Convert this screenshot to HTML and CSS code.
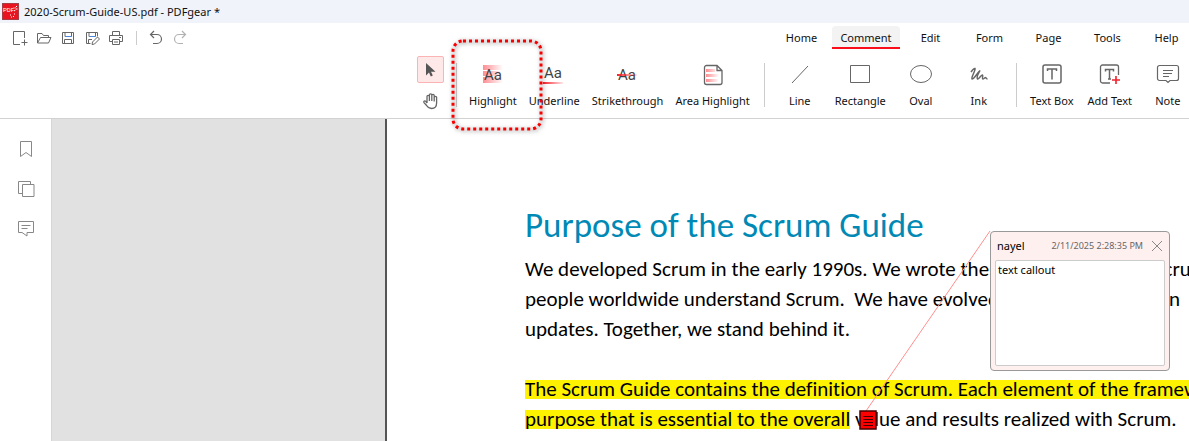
FILE: index.html
```html
<!DOCTYPE html>
<html lang="en">

<head>
    <meta charset="UTF-8">
    <meta name="viewport" content="width=device-width, initial-scale=1.0">
    <title>2020-Scrum-Guide-US.pdf - PDFgear *</title>
    <link rel="stylesheet" href="styles.css">
</head>

<body>
    <header class="titlebar">
        <svg class="logo" width="17" height="17" viewBox="0 0 17 17">
            <rect width="17" height="17" fill="#ea1420" />
            <text x="1" y="9">PDF</text>
            <path d="M15 3l-1.500 1.500M12 4.500l1 1M15.500 6H14M12 8l1.500-1" stroke="#fff" />
            <path d="M8 12h1M12 11h1M9 14h1M11 13.500h1" stroke="#fff" />
        </svg>
        <span>2020-Scrum-Guide-US.pdf - PDFgear *</span>
    </header>

    <div class="menubar">
        <div class="quick-actions">
            <button type="button" aria-label="New">
                <svg width="16" height="16" viewBox="0 0 16 16"><path d="M8 14.500H1.500v-13h11V8M12.500 9.500v6M9.500 12.500h6" /></svg>
            </button>
            <button type="button" aria-label="Open">
                <svg width="16" height="16" viewBox="0 0 16 16"><path d="M1.500 13V3.500H6l1.500 2h5V7M1.500 13L4.500 7.500h10.500L12.500 13z" /></svg>
            </button>
            <button type="button" aria-label="Save">
                <svg width="16" height="16" viewBox="0 0 16 16"><path d="M2.500 2.500h11v11h-11zM5 2.500v4h6.500v-4M4.500 13.500v-4h7v4" /><path class="blue" d="M5 6.500h6" /></svg>
            </button>
            <button type="button" aria-label="Save as">
                <svg width="16" height="16" viewBox="0 0 16 16"><path d="M6.500 13.500h-4v-11h11v4M5 2.500v4h6.500v-4M4.500 13v-3.500H8" /><path class="blue" d="M5 6.500h6" /><path d="M8 14.500l.5-2.500 5-5 2 2-5 5z" /></svg>
            </button>
            <button type="button" aria-label="Print">
                <svg width="16" height="16" viewBox="0 0 16 16"><path d="M4.500 5V1.500h7V5M4.500 11.500h-3V5.500h13v6h-3M4.500 9.500h7v5h-7zM6 12h4M11 7.500h2" /></svg>
            </button>
            <span class="divider"></span>
            <button type="button" aria-label="Undo">
                <svg width="16" height="16" viewBox="0 0 16 16"><path d="M6 1L2.500 4.500 6 8M2.500 4.500H9a4.500 4.500 0 0 1 0 9H5" stroke-width="1.200" /></svg>
            </button>
            <button type="button" class="muted" aria-label="Redo">
                <svg width="16" height="16" viewBox="0 0 16 16"><path d="M10 1L13.500 4.500 10 8M13.500 4.500H7a4.500 4.500 0 0 0 0 9h4" stroke-width="1.200" /></svg>
            </button>
        </div>
        <nav class="tabs">
            <button type="button">Home</button>
            <button type="button" class="active">Comment</button>
            <button type="button">Edit</button>
            <button type="button">Form</button>
            <button type="button">Page</button>
            <button type="button">Tools</button>
            <button type="button">Help</button>
        </nav>
    </div>

    <div class="toolbar">
        <div class="modes">
            <button type="button" class="selected" aria-label="Select">
                <svg width="16" height="16" viewBox="0 0 16 16"><path d="M3 1v12.500l3-3 1.800 4 2-.9L8 9.800h4.500z" fill="#555" stroke="none" /></svg>
            </button>
            <button type="button" aria-label="Hand">
                <svg width="18" height="18" viewBox="0 0 18 18"><path d="M5 11V4.500a1.200 1.200 0 0 1 2.400 0V9 3a1.200 1.200 0 0 1 2.400 0v6-5.500a1.200 1.200 0 0 1 2.400 0V9.500 5.500a1.200 1.200 0 0 1 2.400 0V11c0 3.500-2 5.500-5 5.500-2.600 0-3.800-1.200-5-3L2 10.600c-.8-1.400.8-2.200 1.800-1.200L5 11" stroke-width="1.300" /></svg>
            </button>
        </div>
        <span class="divider"></span>
        <div class="tools">
            <button type="button">
                <svg width="24" height="24" viewBox="0 0 24 24">
                    <defs>
                        <linearGradient id="fade">
                            <stop offset="0" stop-color="#ff8d92" />
                            <stop offset="1" stop-color="#ff8d92" stop-opacity="0" />
                        </linearGradient>
                        <linearGradient id="fadeRed">
                            <stop offset="0" stop-color="#f8202c" />
                            <stop offset="1" stop-color="#f8202c" stop-opacity="0.100" />
                        </linearGradient>
                    </defs>
                    <path d="M2 2h20v5H2zM2 8h16v5H2zM2 14h20v6H2z" fill="url(#fade)" stroke="none" />
                    <text x="3" y="17">Aa</text>
                </svg>
                Highlight
            </button>
            <button type="button">
                <svg width="24" height="24" viewBox="0 0 24 24">
                    <text x="2" y="15">Aa</text>
                    <path d="M1 19h20v2H1z" fill="url(#fadeRed)" stroke="none" />
                </svg>
                Underline
            </button>
            <button type="button">
                <svg width="24" height="24" viewBox="0 0 24 24">
                    <text x="2" y="17">Aa</text>
                    <path d="M1 11h20v2H1z" fill="url(#fadeRed)" stroke="none" />
                </svg>
                Strikethrough
            </button>
            <button type="button">
                <svg width="24" height="24" viewBox="0 0 24 24">
                    <path d="M5 6h9v3H5zM5 11h13v3H5zM5 16h12v3H5z" fill="url(#fade)" stroke="none" />
                    <path d="M5.500 2.500H16l5 5v12a2 2 0 0 1-2 2H5.500a2 2 0 0 1-2-2v-15a2 2 0 0 1 2-2zM16 2.500v5h5" stroke-width="1.300" />
                </svg>
                Area Highlight
            </button>
        </div>
        <span class="divider"></span>
        <div class="tools">
            <button type="button">
                <svg width="24" height="24" viewBox="0 0 24 24"><path d="M4 20L20 3" /></svg>
                Line
            </button>
            <button type="button">
                <svg width="24" height="24" viewBox="0 0 24 24"><path d="M2.500 2.500h19v17h-19z" /></svg>
                Rectangle
            </button>
            <button type="button">
                <svg width="24" height="24" viewBox="0 0 24 24"><ellipse cx="12" cy="11" rx="10.500" ry="8.500" /></svg>
                Oval
            </button>
            <button type="button">
                <svg width="24" height="24" viewBox="0 0 24 24"><path d="M4 9C5 7.500 7 5.500 8 5.500 8.500 8 4 14 5 16c1.500 1 5.500-6.500 8-8.500-1.500 3-4 6.500-2.500 8.500 1.500.5 3-4 5-4 1 .5-1 3.500.5 4 1.500 0 1.500-1.500 2.500-1.500.5 0 .5 1.500 2 1.500" stroke-width="1.500" /></svg>
                Ink
            </button>
        </div>
        <span class="divider"></span>
        <div class="tools">
            <button type="button">
                <svg width="24" height="24" viewBox="0 0 24 24"><rect x="3" y="2" width="18" height="18" rx="2" stroke-width="1.500" /><path d="M7.500 8V6h9v2M12 6v10.500" stroke-width="1.500" /></svg>
                Text Box
            </button>
            <button type="button">
                <svg width="24" height="24" viewBox="0 0 24 24"><path d="M12 20H4.500a2 2 0 0 1-2-2V4a2 2 0 0 1 2-2h14a2 2 0 0 1 2 2v8" stroke-width="1.300" /><path d="M7.500 8.500v-2h8v2M11.500 6.500V16M10 16h3" stroke-width="1.500" /><path d="M18 13v8M14 17h8" stroke="#f3202c" stroke-width="1.600" /></svg>
                Add Text
            </button>
            <button type="button">
                <svg width="24" height="24" viewBox="0 0 24 24"><path d="M3.500 2.500h17a2 2 0 0 1 2 2v11a2 2 0 0 1-2 2H14l-2 2-2-2H3.500a2 2 0 0 1-2-2v-11a2 2 0 0 1 2-2zM7 7.500h10M7 10.500h9M7 13.500h6" stroke-width="1.200" /></svg>
                Note
            </button>
        </div>
        <!-- marker around the Highlight tool -->
        <svg class="marker" width="100" height="100" viewBox="0 0 100 100">
            <rect x="6" y="6" width="88" height="88" rx="10" />
        </svg>
    </div>

    <main class="workspace">
        <aside class="sidebar">
            <button type="button" aria-label="Bookmarks">
                <svg width="18" height="18" viewBox="0 0 18 18"><path d="M3.500 1.500h11v15L9 12.500l-5.500 4z" /></svg>
            </button>
            <button type="button" aria-label="Thumbnails">
                <svg width="18" height="18" viewBox="0 0 18 18"><path d="M5.500 13.500h-4v-12h12v3M5.500 4.500h11.500v12H5.500z" /></svg>
            </button>
            <button type="button" aria-label="Comments">
                <svg width="18" height="18" viewBox="0 0 18 18"><path d="M1.500 1.500h15v11H10V16L5 12.500H1.500zM4.500 5.500h9M4.500 8.500h6" /></svg>
            </button>
        </aside>
        <div class="canvas"></div>
        <article class="page">
            <h1>Purpose of the Scrum Guide</h1>
            <p>
                We developed Scrum in the early 1990s. We wrote the first version of the Scrum<br>
                people worldwide understand Scrum.&nbsp; We have evolved the Guide since then<br>
                updates. Together, we stand behind it.
            </p>
            <p>
                <mark>The Scrum Guide contains the definition of Scrum. Each element of the framework</mark><br>
                <mark>purpose that is essential to the overall</mark> value and results realized with Scrum.
            </p>

            <svg class="leader" width="126" height="182" viewBox="0 0 126 182"><path d="M1 181L125 1" /></svg>
            <svg class="note-pin" width="18" height="20" viewBox="0 0 18 20">
                <rect x="1" y="1" width="16" height="18" fill="#f00" stroke="#400" stroke-width="1.500" />
                <path d="M4 6.500h10M4 9.500h10M4 12.500h10M4 15.500h10" stroke="#400" />
            </svg>
            <section class="note">
                <div class="note-head">
                    <span class="author">nayel</span>
                    <time>2/11/2025 2:28:35 PM</time>
                    <button type="button" aria-label="Close">
                        <svg width="12" height="12" viewBox="0 0 12 12"><path d="M1 1l10 10M11 1L1 11" /></svg>
                    </button>
                </div>
                <textarea aria-label="Note text">text callout</textarea>
            </section>
        </article>
    </main>
</body>

</html>
```
FILE: styles.css
```css
* {
    box-sizing: border-box;
    margin: 0;
    padding: 0;
}

body {
    display: flex;
    flex-direction: column;
    height: 100vh;
    overflow: hidden;
    font-family: "Noto Sans", "Open Sans", sans-serif;
    font-size: 11px;
    line-height: 15px;
    color: #111;
    background-color: white;
}

button {
    border: none;
    background: none;
    font: inherit;
    color: inherit;
    white-space: nowrap;
    cursor: pointer;
}

svg {
    display: block;
    fill: none;
    stroke: #666;
}

svg text {
    font-family: Roboto, sans-serif;
    font-size: 15px;
    font-weight: 400;
    fill: #444;
    stroke: none;
}

.titlebar {
    display: flex;
    align-items: center;
    gap: 5px;
    height: 23px;
    padding-left: 2px;
    background-color: #f0f3f9;
}

.logo text {
    font-size: 6px;
    fill: white;
}

.menubar {
    display: flex;
    justify-content: space-between;
    height: 29px;
}

.quick-actions {
    display: flex;
    align-items: center;
    gap: 8px;
    padding-left: 12px;
}

.quick-actions .divider {
    height: 14px;
    margin: 0 3px 0 4px;
}

.blue {
    stroke: #4a86d8;
}

.muted {
    opacity: 0.5;
}

.divider {
    flex: none;
    width: 1px;
    background-color: #ccc;
}

.tabs {
    display: flex;
    gap: 2px;
    margin-right: -6px;
    padding: 3px 0;
}

.tabs button {
    width: 57px;
    padding-top: 2px;
    border-bottom: 2px solid transparent;
    border-radius: 4px 4px 0 0;
}

.tabs .active {
    width: 68px;
    background-color: #f3f3f3;
    border-bottom-color: #fb0d1b;
}

.toolbar {
    position: relative;
    display: flex;
    flex: none;
    height: 67px;
    padding-left: 417px;
    border-bottom: 1px solid #d2d2d2;
}

.toolbar > .divider {
    height: 44px;
    margin: 11px 6px 0 8px;
}

.modes {
    display: flex;
    flex-direction: column;
    gap: 4px;
    padding-top: 4px;
    margin-right: 4px;
}

.modes button {
    display: grid;
    place-items: center;
    width: 27px;
    height: 27px;
}

.modes .selected {
    border: 1px solid #fbb4b4;
    border-radius: 2px;
    background-color: #ffe8e8;
}

.tools {
    display: flex;
}

.tools button {
    display: flex;
    flex-direction: column;
    align-items: center;
    gap: 6px;
    min-width: 58px;
    padding: 11px 6px 0;
}

.marker {
    position: absolute;
    left: 447px;
    top: -17px;
    z-index: 2;
    pointer-events: none;
    filter: drop-shadow(1px 1px 2px rgba(0, 0, 0, 0.5));
}

.marker rect {
    stroke: #f80000;
    stroke-width: 3;
    stroke-dasharray: 3 3;
}

.workspace {
    display: flex;
    flex: 1;
    min-height: 0;
}

.sidebar {
    display: flex;
    flex-direction: column;
    align-items: center;
    gap: 22px;
    width: 51px;
    padding-top: 21px;
}

.sidebar svg {
    stroke: #888;
}

.canvas {
    width: 336px;
    flex: none;
    border-left: 1px solid #d6d6d6;
    border-right: 2px solid #555;
    background-color: #e1e1e1;
}

.page {
    position: relative;
    flex: 1;
    min-width: 0;
    overflow: hidden;
    padding: 86px 0 0 138px;
    font-family: Carlito, Lato, sans-serif;
    font-size: 21px;
    font-variant-ligatures: none;
    line-height: 30px;
    color: #000;
    white-space: nowrap;
}

.page h1 {
    margin-bottom: 9px;
    font-size: 35px;
    font-weight: 400;
    line-height: 40px;
    color: #0089b5;
}

.page p {
    margin-bottom: 30px;
}

.page mark {
    color: inherit;
    background: linear-gradient(#fff200, #fff200) center / 100% 19px no-repeat;
}

.leader {
    position: absolute;
    left: 478px;
    top: 111px;
    stroke: #ff8f8f;
}

.note-pin {
    position: absolute;
    left: 472px;
    top: 291px;
}

.note {
    position: absolute;
    left: 603px;
    top: 112px;
    display: flex;
    flex-direction: column;
    width: 180px;
    height: 140px;
    padding: 0 4px 4px;
    border: 1px solid #999;
    border-radius: 4px;
    background-color: #fff0f0;
    font-family: "Noto Sans", "Open Sans", sans-serif;
    font-size: 11px;
    line-height: 16px;
}

.note-head {
    display: flex;
    align-items: center;
    gap: 8px;
    height: 28px;
    padding: 0 2px;
}

.note-head time {
    margin-left: auto;
    font-size: 9px;
    color: #666;
}

.note-head svg {
    stroke: #888;
}

.note textarea {
    flex: 1;
    padding: 1px 2px;
    border: 1px solid #ccc;
    border-radius: 2px;
    outline: none;
    resize: none;
    font: inherit;
    color: inherit;
    background-color: white;
}
```
